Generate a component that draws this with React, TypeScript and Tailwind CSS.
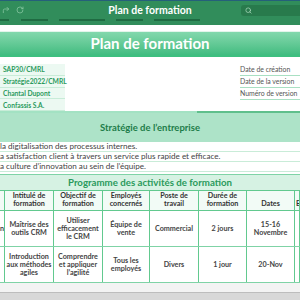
import { CornerUpRight, RotateCw, Search } from 'lucide-react'

const FONT = { fontFamily: 'Lato, "Open Sans", "Liberation Sans", sans-serif' }

const infoLeft = ['SAP30/CMRL', 'Stratégie2022/CMRL', 'Chantal Dupont', 'Confassis S.A.']
const infoRight = ['Date de création', 'Date de la version', 'Numéro de version']

const strategy = [
  'la digitalisation des processus internes.',
  'a satisfaction client à travers un service plus rapide et efficace.',
  'a culture d’innovation au sein de l’équipe.',
]

const headers = ['', 'Intitulé de formation', 'Objectif de formation', 'Employés concernés', 'Poste de travail', 'Durée de formation', 'Dates', 'E']

const rows = [
  ['n', 'Maîtrise des outils CRM', 'Utiliser efficacement le CRM', 'Équipe de vente', 'Commercial', '2 jours', '15-16 Novembre', ''],
  ['', 'Introduction aux méthodes agiles', 'Comprendre et appliquer l’agilité', 'Tous les employés', 'Divers', '1 jour', '20-Nov', ''],
]

const GRID = 'grid grid-cols-[5px_49px_49px_47px_49px_48px_48px_1fr]'

export default function App() {
  return (
    <div className="w-[300px] h-[300px] overflow-hidden bg-white flex flex-col" style={FONT}>
      {/* ─── Toolbar ─────────────────────────────────────────── */}
      <div className="h-[25px] shrink-0 bg-[#318d5b] border-t border-[#25607a] flex flex-col">
        <div className="h-[18px] grid grid-cols-[1fr_auto_1fr] items-center">
          <div className="flex items-center gap-[6px] pl-[2px] text-[#8ccaa6]">
            <CornerUpRight className="w-[8px] h-[8px]" strokeWidth={2.2} />
            <RotateCw className="w-[8px] h-[8px]" strokeWidth={2.2} />
          </div>
          <div className="text-white font-bold text-[10.5px] leading-none">Plan de formation</div>
          <div className="flex justify-end">
            <div className="w-[59px] h-[11px] bg-[#287a4c] rounded-l-[3px] flex items-center pl-[4px]">
              <Search className="w-[7px] h-[7px] text-[#a9d8bc]" strokeWidth={2.5} />
            </div>
          </div>
        </div>
        <div className="flex h-[2px]">
          <div className="w-[9px] bg-[#1f6b42]" />
          <div className="ml-[12px] w-[27px] bg-[#1f6b42]" />
          <div className="ml-[11px] w-[46px] bg-[#1f6b42]" />
          <div className="ml-[11px] w-[27px] bg-[#1f6b42]" />
          <div className="ml-[11px] w-[46px] bg-[#1f6b42]" />
        </div>
      </div>

      {/* ─── Banner ──────────────────────────────────────────── */}
      <div className="h-[6px] shrink-0" />
      <div className="h-[1px] shrink-0 bg-[#e3f5eb]" />
      <div className="h-[23px] shrink-0 bg-gradient-to-b from-[#83d8ad] to-[#3fbc80] flex items-center justify-center">
        <span className="text-white font-bold text-[15px] leading-none">Plan de formation</span>
      </div>
      <div className="h-[2px] shrink-0 bg-[#3dbf7f]" />

      {/* ─── Infos ───────────────────────────────────────────── */}
      <div className="h-[54px] shrink-0 flex pt-[7px]">
        <div className="w-[65px] flex flex-col">
          {infoLeft.map((t) => (
            <div key={t} className="h-[12px] bg-[#ecf9f2] border-b border-[#c8ecd8] flex items-center pl-[3px] text-[6.7px] font-bold text-[#2a9a5c] whitespace-nowrap">
              {t}
            </div>
          ))}
        </div>
        <div className="ml-auto w-[60px] flex flex-col">
          {infoRight.map((t) => (
            <div key={t} className="h-[12px] border-b border-[#a9e0c3] flex items-center text-[6.9px] text-[#555] whitespace-nowrap">
              {t}
            </div>
          ))}
        </div>
      </div>
      <div className="flex h-[2px] shrink-0">
        <div className="w-[197px] bg-[#a3e2c3]" />
        <div className="flex-1 bg-[#5fbf8c]" />
      </div>

      {/* ─── Stratégie ───────────────────────────────────────── */}
      <div className="h-[29px] shrink-0 bg-[#ade3c8] flex items-center justify-center pt-[1px]">
        <span className="text-[#1e7d4a] font-bold text-[9.5px]">Stratégie de l’entreprise</span>
      </div>
      {strategy.map((t) => (
        <div key={t} className="h-[10px] shrink-0 border-b border-[#c9ecd8] flex items-center text-[8.1px] text-[#444] whitespace-nowrap">
          {t}
        </div>
      ))}

      {/* ─── Programme ───────────────────────────────────────── */}
      <div className="h-[2px] shrink-0" />
      <div className="h-[16px] shrink-0 border-t border-[#7fd3a6] bg-[#d6f2e3] flex items-center justify-center">
        <span className="text-[#2a9a5c] font-bold text-[9.7px] leading-none">Programme des activités de formation</span>
      </div>
      <div className={`${GRID} h-[21px] shrink-0 bg-[#f2fbf6] border-t border-b border-[#62c98f]`}>
        {headers.map((h, i) => (
          <div key={i} className={`border-r border-[#62c98f] flex items-end pb-[2px] overflow-hidden ${i === 7 ? 'justify-start pl-[1px]' : 'justify-center'}`}>
            <span className="text-[7.2px] font-bold text-[#333] leading-[8px] text-center">{h}</span>
          </div>
        ))}
      </div>
      {rows.map((r, ri) => (
        <div key={ri} className={`${GRID} h-[36px] shrink-0 border-b border-[#7fd3a6]`}>
          {r.map((c, i) => (
            <div key={i} className={`border-r border-[#62c98f] flex items-center overflow-hidden ${i === 0 ? 'justify-end' : 'justify-center'}`}>
              <span className="text-[7.2px] font-bold text-[#444] leading-[8px] text-center">{c}</span>
            </div>
          ))}
        </div>
      ))}

      {/* ─── Footer ──────────────────────────────────────────── */}
      <div className="h-[9px] shrink-0 bg-[#f3f3f3]" />
      <div className="flex-1 bg-[#d8d8d8] border-t border-[#bdbdbd]" />
    </div>
  )
}
